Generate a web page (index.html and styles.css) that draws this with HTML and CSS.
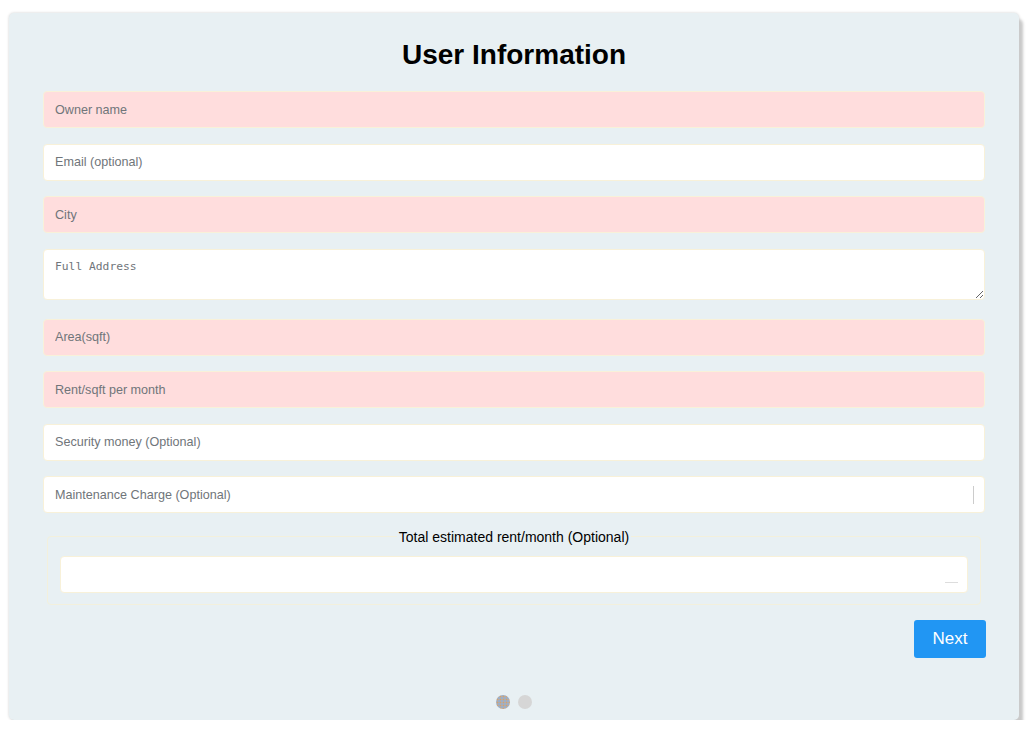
FILE: index.html
```html
<!DOCTYPE html>
<html>
<head>
    <title>User Information</title>
    <link rel="stylesheet" href="styles.css">
</head>
<body>
    <div class="card">
        <h1>User Information</h1>
        <form class="form">
            <input class="field required" type="text" placeholder="Owner name">
            <input class="field" type="email" placeholder="Email (optional)">
            <input class="field required" type="text" placeholder="City">
            <textarea class="field address" placeholder="Full Address"></textarea>
            <input class="field required" type="text" placeholder="Area(sqft)">
            <input class="field required" type="text" placeholder="Rent/sqft per month">
            <input class="field" type="text" placeholder="Security money (Optional)">
            <div class="wrap">
                <input class="field" type="text" placeholder="Maintenance Charge (Optional)">
                <span class="caret"></span>
            </div>
            <fieldset class="total">
                <legend>Total estimated rent/month (Optional)</legend>
                <div class="wrap">
                    <input class="field inner" type="text">
                    <span class="dash"></span>
                </div>
            </fieldset>
            <div class="actions">
                <button type="button" class="next">Next</button>
            </div>
        </form>
        <div class="dots">
            <span class="dot active"></span>
            <span class="dot"></span>
        </div>
    </div>
</body>
</html>
```

FILE: styles.css
```css
* {
    box-sizing: border-box;
    margin: 0;
    padding: 0;
}

body {
    background-color: #fff;
    font-family: "Liberation Sans", Arial, sans-serif;
}

.card {
    margin: 13px 0 0 9px;
    width: 1010px;
    height: 707px;
    padding: 26px 34px 0 34px;
    background-color: #e8f0f3;
    border-radius: 5px;
    box-shadow: 0 0 3px #d0d0d0, 4px 6px 3px #c8c8c8;
}

h1 {
    text-align: center;
    font-size: 28px;
    line-height: 32px;
    font-weight: bold;
    color: #000;
    margin-bottom: 20px;
}

.form {
    display: flex;
    flex-direction: column;
    gap: 15.5px;
}

.field {
    display: block;
    width: 100%;
    height: 37px;
    padding: 0 11px;
    border: 1px solid #f8f1d9;
    border-radius: 4px;
    background-color: #fff;
    font-family: "Liberation Sans", Arial, sans-serif;
    font-size: 12.6px;
    color: #333;
    outline: none;
}

.field::placeholder {
    color: #70757a;
}

.required {
    background-color: #ffdddd;
}

.address {
    height: 51px;
    padding: 10px 11px;
    margin-bottom: 3.5px;
    font-family: "DejaVu Sans Mono", "Liberation Mono", monospace;
    font-size: 11.3px;
    resize: vertical;
}

.wrap {
    position: relative;
}

.caret {
    position: absolute;
    right: 11px;
    top: 10px;
    width: 1px;
    height: 18px;
    background-color: #ccc;
}

.dash {
    position: absolute;
    right: 10px;
    bottom: 10px;
    width: 13px;
    height: 1px;
    background-color: #ddd;
}

.total {
    margin: 0 4px 0 4px;
    padding: 11px 12px 11px 12px;
    border: 1px solid #f3f0dc;
    border-radius: 4px;
}

.total legend {
    margin: 0 auto;
    padding: 0 2px;
    font-size: 14px;
    color: #000;
}

.inner {
    height: 37px;
}

.actions {
    display: flex;
    justify-content: flex-end;
    margin-right: -1px;
}

.next {
    width: 72px;
    height: 38px;
    background-color: #2196f3;
    color: #fff;
    border: none;
    border-radius: 3px;
    font-family: "Liberation Sans", Arial, sans-serif;
    font-size: 17px;
    cursor: pointer;
}

.dots {
    display: flex;
    justify-content: center;
    gap: 8px;
    margin-top: 37px;
}

.dot {
    width: 14px;
    height: 14px;
    border-radius: 50%;
    background-color: #d6d6d6;
}

.dot.active {
    background-color: #b9b9bc;
    background-image: radial-gradient(circle, #c9a27a 0.8px, transparent 1.2px), radial-gradient(circle, #7ea6d6 0.8px, transparent 1.2px);
    background-size: 3px 3px, 3px 3px;
    background-position: 0 0, 1.5px 1.5px;
}
```
